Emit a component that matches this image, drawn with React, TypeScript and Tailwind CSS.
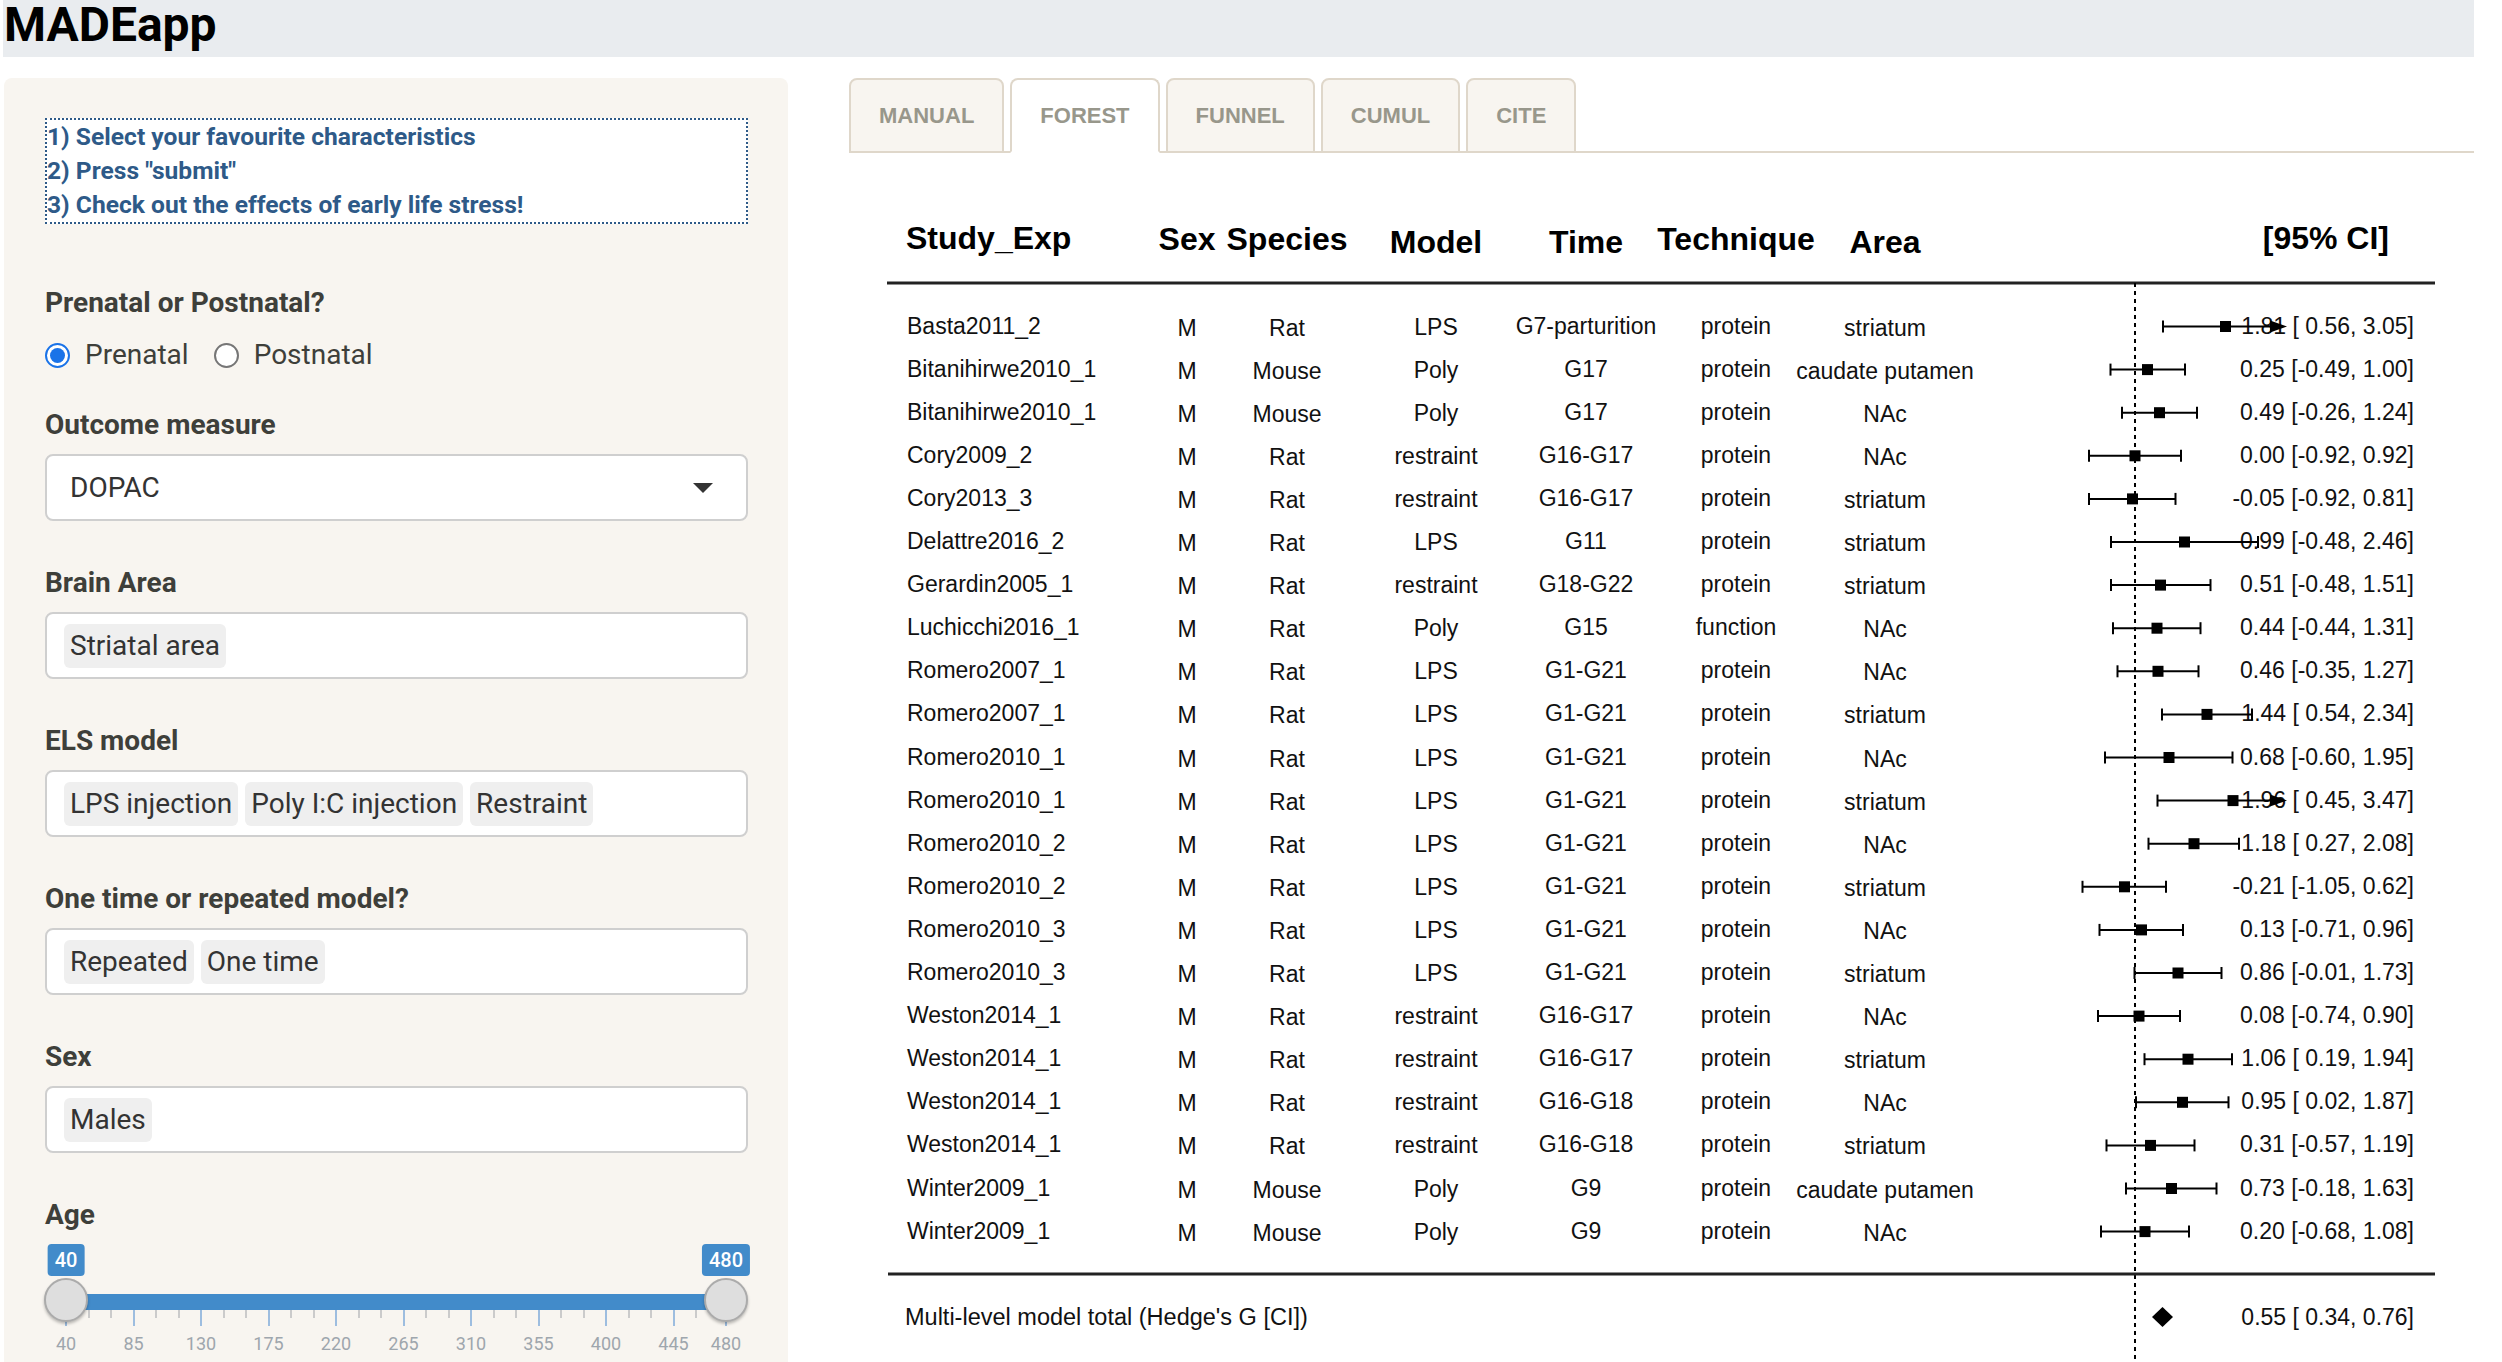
import React from "react"

type Row = [string, string, string, string, string, string, number, number, number]

// study, species, model, time, technique, area, est, lo, hi
const ROWS: Row[] = [
  ["Basta2011_2", "Rat", "LPS", "G7-parturition", "protein", "striatum", 1.81, 0.56, 3.05],
  ["Bitanihirwe2010_1", "Mouse", "Poly", "G17", "protein", "caudate putamen", 0.25, -0.49, 1.0],
  ["Bitanihirwe2010_1", "Mouse", "Poly", "G17", "protein", "NAc", 0.49, -0.26, 1.24],
  ["Cory2009_2", "Rat", "restraint", "G16-G17", "protein", "NAc", 0.0, -0.92, 0.92],
  ["Cory2013_3", "Rat", "restraint", "G16-G17", "protein", "striatum", -0.05, -0.92, 0.81],
  ["Delattre2016_2", "Rat", "LPS", "G11", "protein", "striatum", 0.99, -0.48, 2.46],
  ["Gerardin2005_1", "Rat", "restraint", "G18-G22", "protein", "striatum", 0.51, -0.48, 1.51],
  ["Luchicchi2016_1", "Rat", "Poly", "G15", "function", "NAc", 0.44, -0.44, 1.31],
  ["Romero2007_1", "Rat", "LPS", "G1-G21", "protein", "NAc", 0.46, -0.35, 1.27],
  ["Romero2007_1", "Rat", "LPS", "G1-G21", "protein", "striatum", 1.44, 0.54, 2.34],
  ["Romero2010_1", "Rat", "LPS", "G1-G21", "protein", "NAc", 0.68, -0.6, 1.95],
  ["Romero2010_1", "Rat", "LPS", "G1-G21", "protein", "striatum", 1.96, 0.45, 3.47],
  ["Romero2010_2", "Rat", "LPS", "G1-G21", "protein", "NAc", 1.18, 0.27, 2.08],
  ["Romero2010_2", "Rat", "LPS", "G1-G21", "protein", "striatum", -0.21, -1.05, 0.62],
  ["Romero2010_3", "Rat", "LPS", "G1-G21", "protein", "NAc", 0.13, -0.71, 0.96],
  ["Romero2010_3", "Rat", "LPS", "G1-G21", "protein", "striatum", 0.86, -0.01, 1.73],
  ["Weston2014_1", "Rat", "restraint", "G16-G17", "protein", "NAc", 0.08, -0.74, 0.9],
  ["Weston2014_1", "Rat", "restraint", "G16-G17", "protein", "striatum", 1.06, 0.19, 1.94],
  ["Weston2014_1", "Rat", "restraint", "G16-G18", "protein", "NAc", 0.95, 0.02, 1.87],
  ["Weston2014_1", "Rat", "restraint", "G16-G18", "protein", "striatum", 0.31, -0.57, 1.19],
  ["Winter2009_1", "Mouse", "Poly", "G9", "protein", "caudate putamen", 0.73, -0.18, 1.63],
  ["Winter2009_1", "Mouse", "Poly", "G9", "protein", "NAc", 0.2, -0.68, 1.08],
]

const TABS = ["Manual", "Forest", "Funnel", "Cumul", "Cite"]

const ZERO = 2135
const xOf = (v: number) => ZERO + v * 50
const fmt = (v: number) => (v < 0 ? "" : " ") + v.toFixed(2)

function Radio({ checked, className = "" }: { checked?: boolean; className?: string }) {
  if (checked) {
    return (
      <span className={`flex h-[25px] w-[25px] shrink-0 items-center justify-center rounded-full border-2 border-[#1a73e8] bg-white ${className}`}>
        <span className="h-[15px] w-[15px] rounded-full bg-[#1a73e8]" />
      </span>
    )
  }
  return <span className={`block h-[25px] w-[25px] shrink-0 rounded-full border-2 border-[#767676] bg-white ${className}`} />
}

function Label({ children, className = "" }: { children: React.ReactNode; className?: string }) {
  return <p className={`text-[28px] font-bold leading-[40px] ${className}`}>{children}</p>
}

function TagBox({ tags }: { tags: string[] }) {
  return (
    <div className="mt-[9px] flex h-[67px] gap-[7px] rounded-[8px] border-2 border-[#cfcfcf] bg-white pl-[17px] pt-[10px]">
      {tags.map((t) => (
        <span key={t} className="flex h-[44px] items-center rounded-[6px] bg-[#efefef] px-[6px] text-[28px] text-[#333]">
          {t}
        </span>
      ))}
    </div>
  )
}

function AgeSlider() {
  const px = (v: number) => 66 - 45 + (v - 40) * 1.5
  const majors = [40, 85, 130, 175, 220, 265, 310, 355, 400, 445]
  const minors: number[] = []
  majors.forEach((m) => minors.push(m + 15, m + 30))

  return (
    <div className="relative mt-[9px] h-[120px]">
      {/* value badges */}
      <span className="absolute top-0 flex h-[32px] -translate-x-1/2 items-center rounded-[4px] bg-[#428bca] px-[7px] text-[20px] font-medium text-white" style={{ left: px(40) }}>
        40
      </span>
      <span className="absolute top-0 flex h-[32px] -translate-x-1/2 items-center rounded-[4px] bg-[#428bca] px-[7px] text-[20px] font-medium text-white" style={{ left: px(480) }}>
        480
      </span>

      {/* grid */}
      {majors.concat(480).map((m) => (
        <React.Fragment key={m}>
          <span className="absolute top-[66px] h-[16px] w-[2px] -translate-x-1/2 bg-[#9dbddf]" style={{ left: px(m) }} />
          <span className="absolute top-[91px] -translate-x-1/2 text-[18px] leading-[18px] text-[#9ea6ad]" style={{ left: px(m) }}>
            {m}
          </span>
        </React.Fragment>
      ))}
      {minors.map((m) => (
        <span key={m} className="absolute top-[66px] h-[8px] w-[2px] -translate-x-1/2 bg-[#cbcbcb]" style={{ left: px(m) }} />
      ))}

      {/* bar + handles */}
      <div className="absolute top-[50px] h-[16px] bg-[#428bca]" style={{ left: px(40), width: px(480) - px(40) }} />
      <span className="absolute top-[34px] h-[44px] w-[44px] -translate-x-1/2 rounded-full border-2 border-[#ababab] bg-[#dedede] shadow-[0_2px_3px_rgba(0,0,0,0.25)]" style={{ left: px(40) }} />
      <span className="absolute top-[34px] h-[44px] w-[44px] -translate-x-1/2 rounded-full border-2 border-[#ababab] bg-[#dedede] shadow-[0_2px_3px_rgba(0,0,0,0.25)]" style={{ left: px(480) }} />
    </div>
  )
}

function Sidebar() {
  return (
    <aside className="ml-px w-[784px] shrink-0 rounded-[8px] bg-[#f8f5f0] pb-[60px] pl-[41px] pr-[40px] pt-[40px]">
      <div className="border-2 border-dotted border-[#2e5a88] bg-white text-[24.6px] font-bold leading-[34px] text-[#2e5a88]">
        <p>1) Select your favourite characteristics</p>
        <p>2) Press "submit"</p>
        <p>3) Check out the effects of early life stress!</p>
      </div>

      <Label className="mt-[59px]">Prenatal or Postnatal?</Label>
      <div className="mt-[12px] flex h-[40px] items-center text-[28px]">
        <Radio checked />
        <span className="ml-[15px]">Prenatal</span>
        <Radio className="ml-[25px]" />
        <span className="ml-[15px]">Postnatal</span>
      </div>

      <Label className="mt-[30px]">Outcome measure</Label>
      <div className="mt-[9px] flex h-[67px] items-center justify-between rounded-[8px] border-2 border-[#cfcfcf] bg-white pl-[23px] pr-[33px] text-[28px] text-[#333]">
        <span>DOPAC</span>
        <svg width="20" height="10" viewBox="0 0 20 10">
          <path d="M0 0 L20 0 L10 10 Z" fill="#333" />
        </svg>
      </div>

      <Label className="mt-[42px]">Brain Area</Label>
      <TagBox tags={["Striatal area"]} />

      <Label className="mt-[42px]">ELS model</Label>
      <TagBox tags={["LPS injection", "Poly I:C injection", "Restraint"]} />

      <Label className="mt-[42px]">One time or repeated model?</Label>
      <TagBox tags={["Repeated", "One time"]} />

      <Label className="mt-[42px]">Sex</Label>
      <TagBox tags={["Males"]} />

      <Label className="mt-[42px]">Age</Label>
      <AgeSlider />
    </aside>
  )
}

function ForestPlot() {
  const font = "'Liberation Sans', Arial, sans-serif"
  return (
    <svg className="block h-[1209px] w-[1625px]" viewBox="849 153 1625 1209" fontFamily={font}>
      {/* headings */}
      <g fontSize="32" fontWeight="bold" fill="#000">
        <text x="906" y="249">Study_Exp</text>
        <text x="1187" y="250" textAnchor="middle">Sex</text>
        <text x="1287" y="250" textAnchor="middle">Species</text>
        <text x="1436" y="253" textAnchor="middle">Model</text>
        <text x="1586" y="253" textAnchor="middle">Time</text>
        <text x="1736" y="250" textAnchor="middle">Technique</text>
        <text x="1885" y="253" textAnchor="middle">Area</text>
        <text x="2389" y="249" textAnchor="end">[95% CI]</text>
      </g>
      <line x1="887" x2="2435" y1="283" y2="283" stroke="#222" strokeWidth="3" />
      <line x1={ZERO} x2={ZERO} y1="283" y2="1362" stroke="#000" strokeWidth="2" strokeDasharray="4 4" />

      {ROWS.map((r, i) => {
        const [study, species, model, time, tech, area, est, lo, hi] = r
        const y = 326.5 + 43.1 * i
        const clipped = hi > 3
        const xHi = clipped ? 2273 : xOf(hi)
        return (
          <g key={i}>
            <g fontSize="23" fill="#111">
              <text x="907" y={y + 7}>{study}</text>
              <text x="1187" y={y + 9} textAnchor="middle">M</text>
              <text x="1287" y={y + 9} textAnchor="middle">{species}</text>
              <text x="1436" y={y + 8} textAnchor="middle">{model}</text>
              <text x="1586" y={y + 7} textAnchor="middle">{time}</text>
              <text x="1736" y={y + 7} textAnchor="middle">{tech}</text>
              <text x="1885" y={y + 9} textAnchor="middle">{area}</text>
              <text x="2414" y={y + 7} textAnchor="end">
                {est.toFixed(2)} [{fmt(lo)}, {hi.toFixed(2)}]
              </text>
            </g>
            <line x1={xOf(lo)} x2={xHi} y1={y} y2={y} stroke="#000" strokeWidth="2" />
            <line x1={xOf(lo)} x2={xOf(lo)} y1={y - 6} y2={y + 6} stroke="#000" strokeWidth="2" />
            {clipped ? (
              <path d={`M2270 ${y - 6} L2287 ${y} L2270 ${y + 6} Z`} fill="#000" />
            ) : (
              <line x1={xHi} x2={xHi} y1={y - 6} y2={y + 6} stroke="#000" strokeWidth="2" />
            )}
            <rect x={xOf(est) - 5.5} y={y - 5.5} width="11" height="11" fill="#000" />
          </g>
        )
      })}

      <line x1="888" x2="2435" y1="1274" y2="1274" stroke="#222" strokeWidth="3" />
      <g fill="#111">
        <text x="905" y="1325" fontSize="23.5">Multi-level model total (Hedge's G [CI])</text>
        <text x="2414" y="1325" fontSize="23" textAnchor="end">0.55 [ 0.34, 0.76]</text>
      </g>
      <path d={`M${xOf(0.34)} 1317 L${xOf(0.55)} 1307 L${xOf(0.76)} 1317 L${xOf(0.55)} 1327 Z`} fill="#000" />
    </svg>
  )
}

function Main() {
  return (
    <main className="ml-[61px] min-w-0 flex-1">
      <ul className="flex gap-[6px] border-b-2 border-[#dfd7ca]">
        {TABS.map((t) => (
          <li
            key={t}
            className={`-mb-[2px] flex h-[75px] items-center rounded-t-[8px] border-2 border-[#dfd7ca] px-[28px] font-['Liberation_Sans',Arial,sans-serif] text-[22px] font-bold uppercase text-[#98978b] ${
              t === "Forest" ? "border-b-white bg-white" : "bg-[#f8f5f0]"
            }`}
          >
            {t}
          </li>
        ))}
      </ul>
      <ForestPlot />
    </main>
  )
}

export default function App() {
  return (
    <div className="min-h-screen bg-white pl-[3px] pr-[28px] font-['Roboto',sans-serif] text-[#3e3f3a]">
      <div className="h-[57px] bg-[#e9ecef]">
        <h1 className="pl-px text-[48px] font-bold leading-[49px] text-black">MADEapp</h1>
      </div>
      <div className="mt-[21px] flex items-start">
        <Sidebar />
        <Main />
      </div>
    </div>
  )
}
